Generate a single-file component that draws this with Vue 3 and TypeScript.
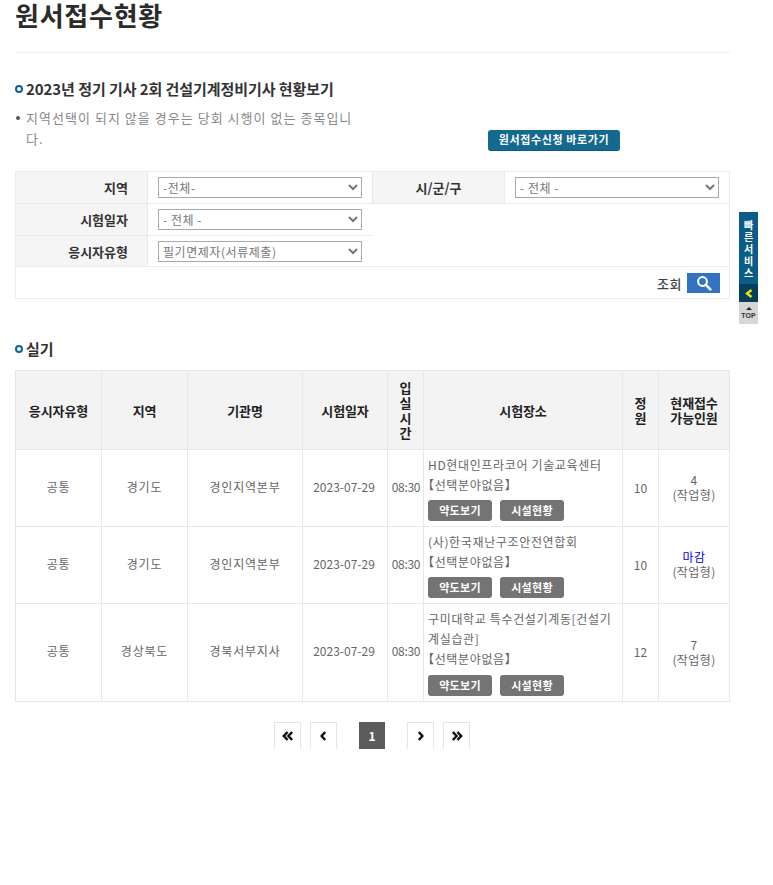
<script setup lang="ts">
interface Row {
  kind: string
  area: string
  org: string
  date: string
  time: string
  place: string
  cap: number
  left: string
  closed: boolean
}
const rows: Row[] = [
  { kind: '공통', area: '경기도', org: '경인지역본부', date: '2023-07-29', time: '08:30', place: 'HD현대인프라코어 기술교육센터', cap: 10, left: '4', closed: false },
  { kind: '공통', area: '경기도', org: '경인지역본부', date: '2023-07-29', time: '08:30', place: '(사)한국재난구조안전연합회', cap: 10, left: '마감', closed: true },
  { kind: '공통', area: '경상북도', org: '경북서부지사', date: '2023-07-29', time: '08:30', place: '구미대학교 특수건설기계동[건설기계실습관]', cap: 12, left: '7', closed: false }
]
</script>

<template>
  <div class="page">
    <h1 class="title">원서접수현황</h1>
    <h2 class="heading first"><i class="dot"></i>2023년 정기 기사 2회 건설기계정비기사 현황보기</h2>
    <div class="note-row">
      <p class="note"><i class="bullet"></i>지역선택이 되지 않을 경우는 당회 시행이 없는 종목입니다.</p>
      <a class="apply">원서접수신청 바로가기</a>
    </div>

    <table class="search">
      <colgroup>
        <col style="width:132px" /><col style="width:225px" /><col style="width:132px" /><col />
      </colgroup>
      <tbody>
        <tr>
          <th>지역</th>
          <td><select><option>-전체-</option></select></td>
          <th class="center">시/군/구</th>
          <td><select class="wide"><option>- 전체 -</option></select></td>
        </tr>
        <tr>
          <th>시험일자</th>
          <td class="open"><select><option>- 전체 -</option></select></td>
          <td class="blank" colspan="2" rowspan="2"></td>
        </tr>
        <tr class="short">
          <th>응시자유형</th>
          <td class="open"><select><option>필기면제자(서류제출)</option></select></td>
        </tr>
        <tr>
          <td class="submit" colspan="4">
            <span>조회</span>
            <button class="find" aria-label="조회">
              <svg width="16" height="16" viewBox="0 0 16 16" fill="none" stroke="#fff">
                <circle cx="6.5" cy="6.5" r="4.4" stroke-width="2" />
                <path d="M10 10l4.3 4.3" stroke-width="2.6" stroke-linecap="round" />
              </svg>
            </button>
          </td>
        </tr>
      </tbody>
    </table>

    <h2 class="heading second"><i class="dot"></i>실기</h2>
    <table class="list">
      <colgroup>
        <col style="width:86px" /><col style="width:86px" /><col style="width:115px" /><col style="width:85px" />
        <col style="width:36px" /><col style="width:199px" /><col style="width:36px" /><col />
      </colgroup>
      <thead>
        <tr>
          <th>응시자유형</th>
          <th>지역</th>
          <th>기관명</th>
          <th>시험일자</th>
          <th>입<br />실<br />시<br />간</th>
          <th>시험장소</th>
          <th>정<br />원</th>
          <th>현재접수<br />가능인원</th>
        </tr>
      </thead>
      <tbody>
        <tr v-for="(r, i) in rows" :key="i">
          <td class="ko">{{ r.kind }}</td>
          <td class="ko">{{ r.area }}</td>
          <td class="ko">{{ r.org }}</td>
          <td class="date">{{ r.date }}</td>
          <td class="time">{{ r.time }}</td>
          <td class="place">
            <div class="pl">{{ r.place }}</div>
            <div class="pl sel">【선택분야없음】</div>
            <div class="btns"><a class="gray">약도보기</a><a class="gray">시설현황</a></div>
          </td>
          <td>{{ r.cap }}</td>
          <td class="left"><span :class="{ closed: r.closed }">{{ r.left }}</span><br />(작업형)</td>
        </tr>
      </tbody>
    </table>

    <nav class="pager">
      <a class="pg" aria-label="처음">
        <svg width="12" height="10" viewBox="0 0 14 12" fill="none" stroke="#111" stroke-width="3"><path d="M6.500 1.200L2 6l4.500 4.800M12 1.200L7.500 6l4.500 4.800" /></svg>
      </a>
      <a class="pg" aria-label="이전">
        <svg width="7" height="10" viewBox="0 0 8 12" fill="none" stroke="#111" stroke-width="3"><path d="M6 1.200L1.800 6 6 10.800" /></svg>
      </a>
      <b class="cur">1</b>
      <a class="pg" aria-label="다음">
        <svg width="7" height="10" viewBox="0 0 8 12" fill="none" stroke="#111" stroke-width="3"><path d="M2 1.200L6.200 6 2 10.800" /></svg>
      </a>
      <a class="pg" aria-label="마지막">
        <svg width="12" height="10" viewBox="0 0 14 12" fill="none" stroke="#111" stroke-width="3"><path d="M2 1.200L6.500 6 2 10.800M7.500 1.200L12 6l-4.500 4.800" /></svg>
      </a>
    </nav>

    <aside class="quick">
      <div class="qtext">빠<br />른<br />서<br />비<br />스</div>
      <div class="qarrow">
        <svg width="8" height="9" viewBox="0 0 8 9" fill="none" stroke="#e8e800" stroke-width="2.400"><path d="M6.500 1L2 4.500 6.500 8" /></svg>
      </div>
      <div class="qtop"><i></i>TOP</div>
    </aside>
  </div>
</template>

<style>
html, body { background: #fff; }
</style>

<style scoped>
.page {
  position: relative;
  width: 715px;
  height: 885px;
  margin-left: 15px;
  font-family: "Noto Sans CJK KR", "Noto Sans", sans-serif;
  font-size: 12px;
  color: #666;
}
.title {
  margin: 0;
  height: 53px;
  border-bottom: 1px solid #eee;
  box-sizing: border-box;
  font-size: 26px;
  line-height: 30px;
  font-weight: 700;
  color: #2b2b2b;
  letter-spacing: 0.75px;
}
.heading {
  display: flex;
  align-items: center;
  margin: 0;
  font-size: 15px;
  line-height: 20px;
  font-weight: 700;
  color: #333;
  letter-spacing: -0.07px;
}
.heading.first { margin-top: 26px; }
.heading.second { margin-top: 40px; }
.dot {
  width: 8px;
  height: 8px;
  box-sizing: border-box;
  border: 2px solid #0f5f9a;
  border-radius: 50%;
  margin-right: 3px;
  flex: none;
}
.note-row {
  display: flex;
  align-items: flex-end;
  margin-top: 8px;
  height: 52px;
}
.note {
  position: relative;
  width: 345px;
  margin: 0;
  padding-left: 11px;
  box-sizing: border-box;
  height: 52px;
  font-size: 13px;
  line-height: 21px;
  letter-spacing: 1.03px;
  color: #888;
}
.bullet {
  position: absolute;
  left: 1px;
  top: 9px;
  width: 4px;
  height: 4px;
  border-radius: 50%;
  background: #555;
}
.apply {
  margin: 0 0 8px 128px;
  width: 132px;
  height: 21px;
  box-sizing: border-box;
  border-radius: 3px;
  background: #14698f;
  border-bottom: 1px solid #0f5a7c;
  color: #fff;
  font-size: 11px;
  font-weight: 700;
  line-height: 18px;
  text-align: center;
  letter-spacing: 0.6px;
}
.search {
  width: 715px;
  margin-top: 12px;
  border-collapse: collapse;
  table-layout: fixed;
}
.search th, .search td {
  border: 1px solid #eaeaea;
  padding: 0;
  height: 32px;
  box-sizing: border-box;
}
.search .short th, .search .short td { height: 31px; }
.search th {
  background: #f5f5f5;
  font-size: 13px;
  font-weight: 700;
  color: #333;
  text-align: right;
  padding-right: 19px;
  letter-spacing: 0;
}
.search th.center { text-align: center; padding-right: 0; }
.search td { padding-left: 10px; }
select {
  display: block;
  width: 204px;
  height: 21px;
  padding: 0;
  box-sizing: border-box;
  border: 1px solid #aaa;
  background: #fff;
  border-radius: 0;
  color: #777;
  font-family: inherit;
  font-size: 12px;
  letter-spacing: 0.55px;
}
.search td.open { border-right: 0; }
.search .blank { border-left: 0; }
.search td.submit {
  height: 32px;
  padding: 0 9px 0 0;
  text-align: right;
  font-size: 13px;
  font-weight: 500;
  color: #444;
  letter-spacing: 0.5px;
}
.submit span { vertical-align: middle; margin-right: 5px; }
.find {
  display: inline-flex;
  align-items: center;
  justify-content: center;
  vertical-align: middle;
  width: 33px;
  height: 20px;
  padding: 0;
  border: 0;
  background: #3373c2;
}
.list {
  width: 715px;
  margin-top: 11px;
  border-collapse: collapse;
  table-layout: fixed;
}
.list th, .list td {
  border: 1px solid #e8e8e8;
  padding: 0;
  text-align: center;
  box-sizing: border-box;
}
.list th {
  height: 79px;
  background: #f3f3f3;
  font-size: 13px;
  line-height: 15px;
  font-weight: 700;
  color: #222;
  letter-spacing: -0.1px;
}
.list td {
  padding-bottom: 2px;
  font-size: 12px;
  line-height: 15px;
  color: #666;
}
.list td.ko { padding-bottom: 4px; letter-spacing: 0.8px; }
.list td.date { padding: 0 2px 4px 0; }
.list td.time { padding: 0 0 4px 1px; letter-spacing: -0.3px; white-space: nowrap; }
.list td.left { letter-spacing: 0.4px; }
.list td.place {
  padding: 5px 5px 5px 4px;
  text-align: left;
  line-height: 20px;
  letter-spacing: 0.65px;
}
.pl { line-height: 20px; }
.pl.sel { margin-left: -6px; }
.btns { display: flex; gap: 8px; margin-top: 5px; }
.list tr:last-child .btns { margin-top: 6px; }
.gray {
  width: 64px;
  height: 21px;
  border-radius: 3px;
  background: #747474;
  color: #fff;
  font-size: 11px;
  font-weight: 700;
  line-height: 20px;
  text-align: center;
  letter-spacing: 0.3px;
}
.closed { color: #0000ee; }
.pager {
  display: flex;
  margin-top: 20px;
  padding-left: 259px;
  height: 27px;
}
.pg, .cur {
  width: 27px;
  height: 27px;
  box-sizing: border-box;
  display: flex;
  align-items: center;
  justify-content: center;
}
.pg {
  border: 1px solid #e5e5e5;
  border-bottom: 0;
  background: #fff;
}
.pg:nth-child(2) { margin-left: 9px; }
.pg:nth-child(4) { margin-left: 22px; }
.pg:nth-child(5) { margin-left: 9px; }
.cur {
  margin-left: 22px;
  width: 26px;
  background: #5c5c5c;
  color: #fff;
  font-weight: 700;
  font-size: 12px;
}
.quick {
  position: absolute;
  left: 724px;
  top: 212px;
  width: 19px;
  font-size: 10px;
  text-align: center;
}
.qtext {
  height: 72px;
  padding-top: 7px;
  box-sizing: border-box;
  background: #0b5d87;
  color: #fff;
  font-weight: 700;
  line-height: 12px;
}
.qarrow {
  height: 18px;
  background: #063f5c;
  display: flex;
  align-items: center;
  justify-content: center;
}
.qtop {
  height: 22px;
  background: #d6d6d6;
  color: #333;
  font-family: "Liberation Sans", sans-serif;
  font-size: 7px;
  font-weight: 700;
  line-height: 9px;
  padding-top: 5px;
  box-sizing: border-box;
}
.qtop i {
  display: block;
  width: 0;
  height: 0;
  margin: 0 auto 1px;
  border-left: 3px solid transparent;
  border-right: 3px solid transparent;
  border-bottom: 3px solid #222;
}
</style>
